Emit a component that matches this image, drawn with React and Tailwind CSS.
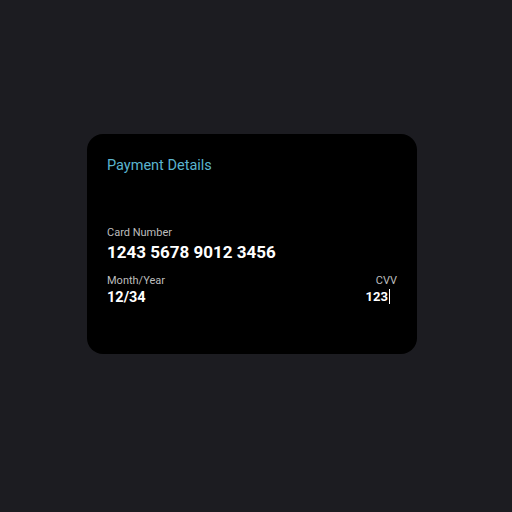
export default function App() {
  return (
    <div className="w-[512px] h-[512px] bg-[#1c1c21] pt-[134px] pl-[87px] font-['Roboto',sans-serif]">
      <div className="w-[330px] h-[220px] bg-black rounded-[16px] px-5 pt-[23px] flex flex-col">
        <h1 className="text-[14.5px] leading-[18px] text-[#5ab4cf]">Payment Details</h1>

        <div className="mt-[51px]">
          <p className="text-[11px] leading-[13px] text-[#bdbdbd]">Card Number</p>
          <p className="text-[17px] leading-[20px] font-bold text-white mt-[3px]">1243 5678 9012 3456</p>
        </div>

        <div className="flex justify-between mt-[12px]">
          <div>
            <p className="text-[11px] leading-[13px] text-[#bdbdbd]">Month/Year</p>
            <p className="text-[14.5px] leading-[17px] font-bold text-white mt-[2px]">12/34</p>
          </div>
          <div className="flex flex-col items-end">
            <p className="text-[11px] leading-[13px] text-[#bdbdbd]">CVV</p>
            <p className="text-[13px] leading-[17px] font-bold text-white mt-px mr-[7px] flex items-center">
              123<span className="w-px h-[15px] bg-white ml-px"></span>
            </p>
          </div>
        </div>
      </div>
    </div>
  );
}
